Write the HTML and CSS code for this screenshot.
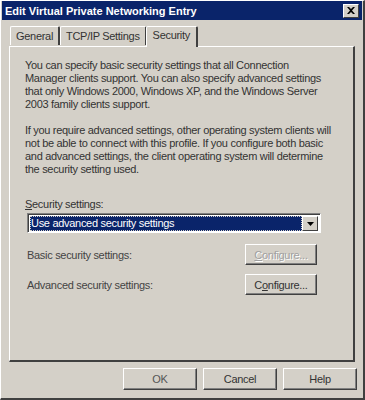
FILE: index.html
```html
<!DOCTYPE html>
<html>
<head>
<meta charset="utf-8">
<title>Edit Virtual Private Networking Entry</title>
<link rel="stylesheet" href="styles.css">
</head>
<body>
<div class="window">
  <div class="titlebar">
    <span class="title">Edit Virtual Private Networking Entry</span>
    <span class="close">
      <svg width="8" height="7" viewBox="0 0 8 7"><path d="M0 0h2l2 2 2-2h2L5 3.5 8 7H6L4 5 2 7H0l3-3.5z" fill="#000"/></svg>
    </span>
  </div>

  <div class="tabs">
    <div class="tab first">General</div>
    <div class="tab">TCP/IP Settings</div>
    <div class="tab active">Security</div>
  </div>

  <div class="panel">
    <p>You can specify basic security settings that all Connection<br>
    Manager clients support. You can also specify advanced settings<br>
    that only Windows 2000, Windows XP, and the Windows Server<br>
    2003 family clients support.</p>
    <p>If you require advanced settings, other operating system clients will<br>
    not be able to connect with this profile. If you configure both basic<br>
    and advanced settings, the client operating system will determine<br>
    the security setting used.</p>

    <div class="label"><u>S</u>ecurity settings:</div>
    <div class="combo">
      <span class="combo-value">Use advanced security settings</span>
      <span class="combo-arrow">
        <svg width="7" height="4" viewBox="0 0 7 4"><path d="M0 0h7L3.5 4z" fill="#000"/></svg>
      </span>
    </div>

    <div class="row">
      <span class="row-label">Basic security settings:</span>
      <span class="btn disabled"><u>C</u>onfigure...</span>
    </div>
    <div class="row">
      <span class="row-label">Advanced security settings:</span>
      <span class="btn">C<u>o</u>nfigure...</span>
    </div>
  </div>

  <div class="buttons">
    <span class="btn wide soft">OK</span>
    <span class="btn wide">Cancel</span>
    <span class="btn wide">Help</span>
  </div>
</div>
</body>
</html>
```

FILE: styles.css
```css
body {
   margin: 0;
   font-family: "Liberation Sans", Arial, sans-serif;
   font-size: 11px;
   letter-spacing: -0.3px;
   color: #2a2a2a;
   background-color: white;
}

.window {
   width: 365px;
   height: 400px;
   box-sizing: border-box;
   background-color: #d4d0c8;
   border-left: 1px solid #ffffff;
   border-top: 1px solid #ffffff;
   border-right: 2px solid #404040;
   border-bottom: 2px solid #404040;
   display: flex;
   flex-direction: column;
}

.titlebar {
   height: 19px;
   margin: 0 1px 0 1px;
   background-color: #0a246a;
   color: white;
   display: flex;
   align-items: center;
   justify-content: space-between;
   padding: 0 3px 0 3px;
}

.title {
   font-weight: bold;
   font-size: 11px;
   letter-spacing: 0;
}

.close {
   width: 16px;
   height: 14px;
   box-sizing: border-box;
   background-color: #d4d0c8;
   border-left: 1px solid #fff;
   border-top: 1px solid #fff;
   border-right: 1px solid #404040;
   border-bottom: 1px solid #404040;
   display: flex;
   align-items: center;
   justify-content: center;
}

.tabs {
   display: flex;
   align-items: flex-end;
   height: 26px;
   margin-left: 8px;
}

.tab {
   height: 18px;
   padding: 0 5px;
   display: flex;
   align-items: center;
   border-left: 1px solid #fff;
   border-top: 1px solid #fff;
   border-right: 2px solid #404040;
   border-top-left-radius: 2px;
   border-top-right-radius: 2px;
   color: #333;
   margin-bottom: 1px;
}

.tab.first {
   margin-left: 1px;
}

.tab.active {
   height: 21px;
   margin-bottom: -1px;
   padding: 2px 6px 0 6px;
   margin-left: -1px;
   background-color: #d4d0c8;
   position: relative;
   z-index: 1;
   align-items: flex-start;
   box-sizing: border-box;
}

.panel {
   height: 316px;
   box-sizing: border-box;
   margin: 0 8px 0 8px;
   border-left: 1px solid #fff;
   border-top: 1px solid #fff;
   border-right: 2px solid #404040;
   border-bottom: 2px solid #404040;
   padding: 12px 8px 0 15px;
}

.panel p {
   margin: 0 0 13px 0;
   line-height: 13px;
   color: #333;
   white-space: nowrap;
}

.label {
   margin-top: 22px;
   color: #333;
}

.combo {
   margin-top: 3px;
   margin-left: 2px;
   width: 294px;
   height: 20px;
   box-sizing: border-box;
   background-color: #fff;
   border-left: 1px solid #808080;
   border-top: 1px solid #808080;
   border-right: 1px solid #fff;
   border-bottom: 1px solid #fff;
   box-shadow: inset 1px 1px 0 #404040;
   display: flex;
   padding: 2px 2px 1px 2px;
}

.combo-value {
   flex: 1;
   background-color: #0a246a;
   color: #fff;
   line-height: 15px;
   padding-left: 1px;
   outline: 1px dotted #d4d0c8;
   outline-offset: -1px;
}

.combo-arrow {
   width: 16px;
   box-sizing: border-box;
   background-color: #d4d0c8;
   border-left: 1px solid #fff;
   border-top: 1px solid #fff;
   border-right: 1px solid #404040;
   border-bottom: 1px solid #404040;
   display: flex;
   align-items: center;
   justify-content: center;
}

.row {
   display: flex;
   justify-content: space-between;
   align-items: center;
   margin-top: 11px;
   margin-left: 2px;
   width: 290px;
}

.row + .row {
   margin-top: 9px;
}

.row-label {
   color: #444;
}

.btn {
   width: 72px;
   height: 21px;
   box-sizing: border-box;
   border-left: 1px solid #fff;
   border-top: 1px solid #fff;
   border-right: 1px solid #404040;
   border-bottom: 1px solid #404040;
   box-shadow: inset -1px -1px 0 #808080;
   display: flex;
   align-items: center;
   justify-content: center;
   color: #333;
}

.btn.disabled {
   color: #a0a0a0;
   text-shadow: 1px 1px 0 #fff;
}

.btn.soft {
   color: #555;
}

.buttons {
   display: flex;
   justify-content: flex-end;
   gap: 6px;
   margin: 6px 6px 0 0;
}

.btn.wide {
   width: 74px;
   height: 22px;
}
```
